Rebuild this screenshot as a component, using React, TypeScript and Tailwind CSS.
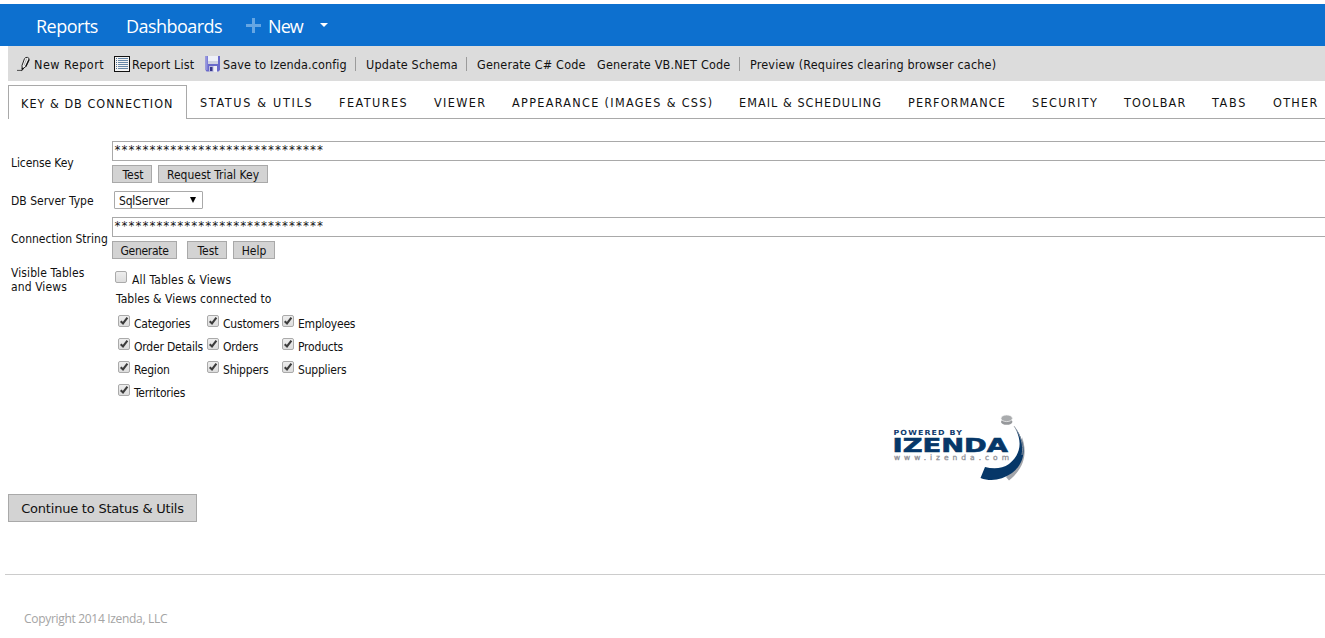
import React from 'react';

const tahoma = "font-['DejaVu_Sans_Condensed','DejaVu_Sans',sans-serif] [font-stretch:condensed]";
const segoe = "font-['Open_Sans','Noto_Sans',sans-serif] [font-stretch:normal]";

const tabs: { label: string; box: string }[] = [
  { label: 'STATUS & UTILS', box: 'w-[139px] tracking-[1.68px]' },
  { label: 'FEATURES', box: 'w-[95px] tracking-[1.47px]' },
  { label: 'VIEWER', box: 'w-[78px] tracking-[1.4px]' },
  { label: 'APPEARANCE (IMAGES & CSS)', box: 'w-[227px] tracking-[1.33px]' },
  { label: 'EMAIL & SCHEDULING', box: 'w-[169px] tracking-[1.05px]' },
  { label: 'PERFORMANCE', box: 'w-[124px] tracking-[1.12px]' },
  { label: 'SECURITY', box: 'w-[92px] tracking-[1.38px]' },
  { label: 'TOOLBAR', box: 'w-[88px] tracking-[1.2px]' },
  { label: 'TABS', box: 'w-[61px] tracking-[1.7px]' },
  { label: 'OTHER', box: 'w-[71px] tracking-[1.3px]' },
];

const tables: string[][] = [
  ['Categories', 'Customers', 'Employees'],
  ['Order Details', 'Orders', 'Products'],
  ['Region', 'Shippers', 'Suppliers'],
  ['Territories'],
];

function Check({ on = false }: { on?: boolean }) {
  return (
    <svg width="12" height="12" viewBox="0 0 12 12" className="shrink-0">
      <defs>
        <linearGradient id="box" x1="0" y1="0" x2="0" y2="1">
          <stop offset="0" stopColor="#eeeeee" />
          <stop offset="1" stopColor="#dcdcdc" />
        </linearGradient>
      </defs>
      <rect x=".5" y=".5" width="11" height="11" rx="1.5" fill="url(#box)" stroke="#aaaaaa" />
      {on && <path d="M2.7 6.2 5 8.4 9.4 2.6" fill="none" stroke="#3c3c3c" strokeWidth="2.1" />}
    </svg>
  );
}

function Btn({ children, box }: { children: React.ReactNode; box: string }) {
  return (
    <button className={`flex h-[18px] items-center justify-center whitespace-nowrap border border-[#a9a9a9] bg-[#d3d3d3] pt-px ${box}`}>
      {children}
    </button>
  );
}

function Sep() {
  return <span className="h-[14px] w-px shrink-0 bg-[#9b9b9b]" />;
}

function Pen() {
  return (
    <svg width="16" height="16" viewBox="0 0 16 16" className="shrink-0">
      <path d="M6 9.500 8.500 2.600Q9.500 1 11.500 1.400Q13.600 2 13 4L9.800 10.500 6.200 13.200Z" fill="#f5f5f5" stroke="#222" strokeWidth="1" />
      <path d="M10.700 2.500 8 9.500" stroke="#999" strokeWidth=".8" />
      <path d="M13 3.500 9.800 10.500" stroke="#111" strokeWidth="1.300" />
      <path d="M1 14.400H6L6.200 12l1.600.6-2.300 2" fill="#111" stroke="#111" strokeWidth=".7" />
    </svg>
  );
}

function ListIcon() {
  return (
    <svg width="16" height="16" viewBox="0 0 16 16" className="shrink-0" shapeRendering="crispEdges">
      <rect x=".5" y=".5" width="15" height="15" fill="#f4f4f4" stroke="#111" />
      <path d="M4 2.500h10M4 4.500h10M4 6.500h10M4 8.500h10M4 10.500h10M4 12.500h10" stroke="#6687a8" />
      <path d="M2 2.500h1M2 4.500h1M2 6.500h1M2 8.500h1M2 10.500h1M2 12.500h1" stroke="#526f8e" />
    </svg>
  );
}

function Disk() {
  return (
    <svg width="16" height="16" viewBox="0 0 16 16" className="shrink-0">
      <path d="M.5 0H15v14l-1.500 1.500H1.500L.5 14Z" fill="#6a6acb" />
      <path d="M.5 0H2.500v14H.5Z" fill="#9292df" />
      <path d="M3 0h10v8H3Z" fill="#eef0f8" />
      <path d="M3 5h10v3H3Z" fill="#cfd2e2" />
      <path d="M4 10h8v6H4Z" fill="#b9b9dc" />
      <path d="M5 11h2.500v4H5Z" fill="#35358b" />
      <path d="M8.500 10h3.500v6H8.500Z" fill="#ededf5" />
    </svg>
  );
}

function Logo() {
  return (
    <svg width="160" height="80" viewBox="0 0 160 80" className="font-['DejaVu_Sans',sans-serif] font-bold [font-stretch:normal]">
      <path d="M142 26C147 40 146 56 129 69.500L126 66C139 54 143 41 142 26Z" fill="#a3a5aa" />
      <path d="M134 15C148 33 146 51 132 62C122 69 111 71 100.500 67L105 56C113 58 122 58 129 53C141 43 143 30 134 15Z" fill="#063768" />
      <path d="M134 15C141 25 144 34 142 44" fill="none" stroke="#a3a5aa" strokeWidth=".8" />
      <ellipse cx="126.700" cy="10.800" rx="5.700" ry="3" fill="#96989b" />
      <ellipse cx="126.700" cy="7.300" rx="5.700" ry="3.300" fill="#a9abad" stroke="#f5f5f5" strokeWidth=".7" />
      <text x="13.500" y="23.600" fontSize="7" textLength="69.500" lengthAdjust="spacingAndGlyphs" fill="#123c6e" letterSpacing="1">POWERED BY</text>
      <text x="12.500" y="40.600" fontSize="19" textLength="115.500" lengthAdjust="spacingAndGlyphs" fill="#063768" stroke="#063768" strokeWidth=".6">IZENDA</text>
      <text x="14" y="48.500" fontSize="7.500" textLength="115" fill="#8f9096" fontWeight="400" stroke="#8f9096" strokeWidth=".3">www.izenda.com</text>
    </svg>
  );
}

function Secret() {
  return (
    <div className="h-5 whitespace-nowrap border border-r-0 border-[#a9a9a9] pl-px pt-px font-['DejaVu_Sans_Mono',monospace] text-[11.6px]">******************************</div>
  );
}

export default function App() {
  return (
    <div className={`h-[638px] w-full overflow-hidden bg-white pt-1 text-[12px] leading-[14px] text-[#111] ${tahoma}`}>
      <header className={`flex h-[42px] items-center whitespace-nowrap bg-[#0d70cf] pl-9 text-[18px] text-white ${segoe}`}>
        <span className="w-[90px] pt-px tracking-[-0.5px]">Reports</span>
        <span className="w-[120px] pt-px tracking-[-0.55px]">Dashboards</span>
        <svg width="15" height="15" viewBox="0 0 15 15"><path d="M7.500 0v15M0 7.500h15" stroke="#65a6e3" strokeWidth="3" /></svg>
        <span className="ml-[7px] w-[52px] pt-px tracking-[-0.9px]">New</span>
        <svg width="8" height="4" viewBox="0 0 8 4"><path d="M0 0h8L4 4Z" fill="#fff" /></svg>
      </header>

      <div className="ml-2 flex h-[35px] items-center whitespace-nowrap bg-[#dcdcdc] pl-2 text-[12.5px] tracking-[0.18px]">
        <Pen />
        <span className="ml-[2px] w-[80px] pt-[2px] tracking-[0.48px]">New Report</span>
        <ListIcon />
        <span className="ml-[2px] w-[73px] pt-[2px]">Report List</span>
        <Disk />
        <span className="ml-[2px] w-[132px] pt-[2px] tracking-[0.12px]">Save to Izenda.config</span>
        <Sep />
        <span className="ml-[10px] w-[100px] pt-[2px]">Update Schema</span>
        <Sep />
        <span className="ml-[10px] w-[120px] pt-[2px]">Generate C# Code</span>
        <span className="w-[142px] pt-[2px]">Generate VB.NET Code</span>
        <Sep />
        <span className="ml-[10px] pt-[2px]">Preview (Requires clearing browser cache)</span>
      </div>

      <nav className="ml-2 mt-1 flex h-[34px] whitespace-nowrap text-[12.5px]">
        <div className="w-[179px] shrink-0 border-l border-r border-t border-[#a9a9a9] pl-3 pt-[11px] tracking-[1.02px]">KEY &amp; DB CONNECTION</div>
        {tabs.map((t) => (
          <div key={t.label} className={`shrink-0 border-b border-[#a9a9a9] pl-[13px] pt-[11px] ${t.box}`}>{t.label}</div>
        ))}
      </nav>

      <main className="pl-[11px] pt-[22px]">
        <div className="flex h-[50px]">
          <label className="w-[101px] shrink-0 pt-[15px] tracking-[-0.1px]">License Key</label>
          <div className="flex-1">
            <Secret />
            <div className="mt-1 flex gap-[6px]">
              <Btn box="w-10 pl-[2px]">Test</Btn>
              <Btn box="w-[110px]">Request Trial Key</Btn>
            </div>
          </div>
        </div>
        <div className="flex h-[26px] items-start">
          <label className="w-[103px] pt-[3px]">DB Server Type</label>
          <div className="flex h-[18px] w-[89px] items-center justify-between rounded-[1px] border border-[#a9a9a9] pl-1 pr-[6px] pt-px tracking-[-0.2px]">
            SqlServer
            <svg width="6" height="6" viewBox="0 0 6 6" className="mb-px"><path d="M0 0h6L3 6Z" fill="#000" /></svg>
          </div>
        </div>
        <div className="flex h-12">
          <label className="w-[101px] shrink-0 whitespace-nowrap pt-[15px]">Connection String</label>
          <div className="flex-1">
            <Secret />
            <div className="mt-1 flex">
              <Btn box="w-[65px] tracking-[-0.3px]">Generate</Btn>
              <Btn box="ml-[10px] w-10 pl-[2px]">Test</Btn>
              <Btn box="ml-[6px] w-[42px]">Help</Btn>
            </div>
          </div>
        </div>
        <div className="flex h-[146px]">
          <label className="w-[104px] shrink-0 pt-[1px] tracking-[0.1px]">Visible Tables<br />and Views</label>
          <div className="whitespace-nowrap pt-[6px]">
            <div className="flex h-[21px]">
              <Check />
              <span className="ml-[5px] pt-[2px] tracking-[0.15px]">All Tables &amp; Views</span>
            </div>
            <div className="h-[23px] pl-px tracking-[0.05px]">Tables &amp; Views connected to</div>
            <div className="grid grid-cols-[89px_75px_80px] pl-[3px] tracking-[-0.2px]">
              {tables.flat().map((name) => (
                <div key={name} className="flex h-[23px]">
                  <Check on />
                  <span className="ml-1 pt-[2px]">{name}</span>
                </div>
              ))}
            </div>
          </div>
        </div>
      </main>

      <div className="flex h-[83px] pl-[880px]"><Logo /></div>
      <button className="ml-2 flex h-7 w-[189px] items-center justify-center whitespace-nowrap border border-[#a9a9a9] bg-[#d3d3d3] pt-px font-['DejaVu_Sans',sans-serif] text-[13px] tracking-[-0.22px] [font-stretch:normal]">Continue to Status &amp; Utils</button>
      <footer className={`ml-[5px] mt-[52px] border-t border-[#cccccc] pl-[19px] pt-[37px] text-[12px] tracking-[-0.31px] text-[#a4a4a4] ${segoe}`}>Copyright 2014 Izenda, LLC</footer>
    </div>
  );
}
